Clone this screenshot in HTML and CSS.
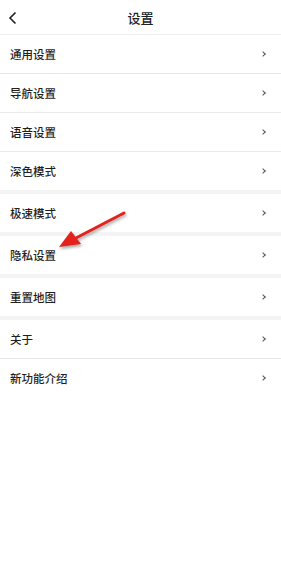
FILE: index.html
```html
<!DOCTYPE html>
<html lang="zh">
<head>
<meta charset="utf-8">
<link rel="stylesheet" href="styles.css">
</head>
<body>
<div class="page">
  <header class="header">
    <svg class="back" width="10" height="14" viewBox="0 0 10 14"><path d="M7.5 1.5 L2 7 L7.5 12.5" fill="none" stroke="#222" stroke-width="1.6"/></svg>
    <div class="title">设置</div>
  </header>
  <ul class="list">
    <li class="row line"><span>通用设置</span><i class="chev"></i></li>
    <li class="row line"><span>导航设置</span><i class="chev"></i></li>
    <li class="row line"><span>语音设置</span><i class="chev"></i></li>
    <li class="row gap"><span>深色模式</span><i class="chev"></i></li>
    <li class="row gap"><span>极速模式</span><i class="chev"></i></li>
    <li class="row gap"><span>隐私设置</span><i class="chev"></i></li>
    <li class="row gap"><span>重置地图</span><i class="chev"></i></li>
    <li class="row line"><span>关于</span><i class="chev"></i></li>
    <li class="row"><span>新功能介绍</span><i class="chev"></i></li>
  </ul>
  <svg class="arrow" width="281" height="571" viewBox="0 0 281 571">
    <defs>
      <filter id="sh" x="-20%" y="-20%" width="140%" height="140%">
        <feDropShadow dx="1" dy="2" stdDeviation="1.5" flood-color="#000" flood-opacity="0.35"/>
      </filter>
    </defs>
    <g filter="url(#sh)">
      <path d="M124 213 L76 238" stroke="#e3211c" stroke-width="3" stroke-linecap="round"/>
      <path d="M59 247 L71 231 L81 244 Z" fill="#e3211c"/>
    </g>
  </svg>
</div>
</body>
</html>
```
FILE: styles.css
```css
* { box-sizing: border-box; }
html, body { margin: 0; padding: 0; background: #fff; }
body { font-family: "Noto Sans CJK SC", "Noto Sans", sans-serif; color: #1f1f1f; }
.page { position: relative; width: 281px; min-height: 571px; }
.header {
  height: 35px;
  border-bottom: 1px solid #efefef;
  display: flex;
  align-items: center;
  justify-content: center;
  position: relative;
}
.back { position: absolute; left: 8px; top: 11px; }
.title { font-size: 13px; line-height: 1; color: #222; font-weight: 500; }
.list { list-style: none; margin: 0; padding: 0; }
.row {
  height: 38px;
  display: flex;
  align-items: center;
  justify-content: space-between;
  padding: 0 14px 0 10px;
  font-size: 11.5px;
  font-weight: 500;
  color: #1f1f1f;
}
.row.line { border-bottom: 1px solid #eaeaea; height: 39px; }
.row.gap { border-bottom: 4px solid #f4f4f4; height: 42px; }
.chev {
  width: 4px; height: 4px;
  border-top: 1px solid #555;
  border-right: 1px solid #555;
  transform: rotate(45deg);
  margin-right: 2px;
}
.arrow { position: absolute; left: 0; top: 0; pointer-events: none; }
```
